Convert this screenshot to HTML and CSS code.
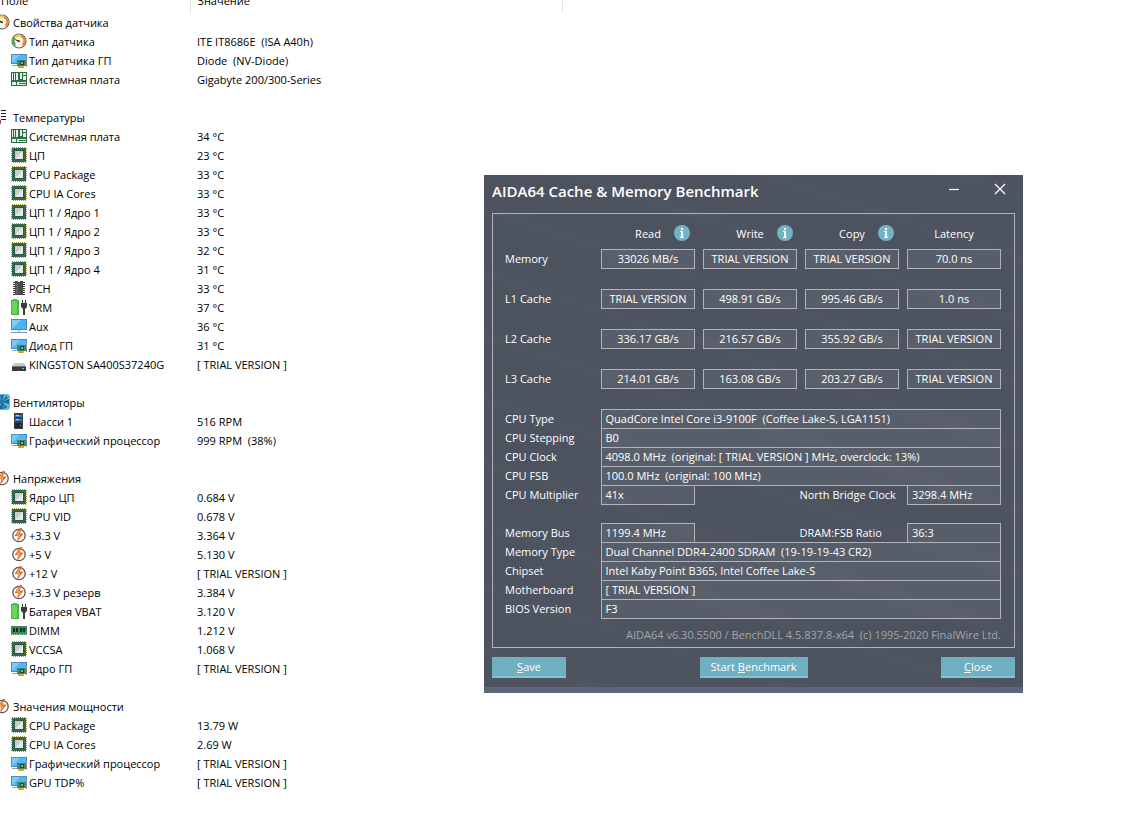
FILE: index.html
```html
<!DOCTYPE html>
<html lang="ru">
<head>
	<meta charset="UTF-8">
	<meta name="viewport" content="width=device-width, initial-scale=1.0">
	<title>AIDA64</title>
	<link rel="stylesheet" href="styles.css">
</head>
<body>
	<svg class="sprite" aria-hidden="true">
		<symbol id="gauge" viewBox="0 0 16 16">
			<circle cx="8" cy="8" r="7" fill="#fbf6e4" stroke="#666" stroke-width="1.2"/>
			<path d="M4.4 12A5.3 5.3 0 0 1 4 4.5" fill="none" stroke="#4fae4a" stroke-width="2.2"/>
			<path d="M4 4.5A5.3 5.3 0 0 1 10 3" fill="none" stroke="#f0cf5a" stroke-width="2.2"/>
			<path d="M10 3A5.3 5.3 0 0 1 11.6 12" fill="none" stroke="#e8893a" stroke-width="2.2"/>
			<path d="M3.6 6.2L8.6 7.4 9 9 7.4 9z" fill="#222"/>
		</symbol>
		<symbol id="gpu" viewBox="0 0 16 16">
			<path d="M0 2h16v10H0z" fill="#4590bd"/>
			<path d="M1 3h14v8H1z" fill="#55b4f2"/>
			<path d="M1 11L9 3H1z" fill="#7cc9fa"/>
			<path d="M1 13h5v1H1z" fill="#8ba3b5"/>
			<path d="M6 8h9v6H6z" fill="#3a8a68"/>
			<path d="M15 6h1v9h-1z" fill="#8a9296"/>
			<path d="M9 9h4v4H9z" fill="#1d4a3a"/>
			<path d="M10 10h2v2h-2z" fill="#86b9a3"/>
			<path d="M7 14h6v2H7z" fill="#e5ae22"/>
			<path d="M9 14h1v2H9z" fill="#c9941a"/>
		</symbol>
		<symbol id="board" viewBox="0 0 16 16">
			<path d="M0 1h16v14H0z" fill="#2b7045"/>
			<path d="M1 2h1v7H1zM3 2h1v7H3zM5 2h2v7H5zM9 2h2v6H9zM12 2h3v2h-3zM12 5h3v4h-3zM1 11h4v3H1zM6 11h9v3H6z" fill="#e4f0e6"/>
			<path d="M8 12h7v1H8z" fill="#2b7045"/>
		</symbol>
		<symbol id="cpu" viewBox="0 0 16 16">
			<rect x="1" y="1" width="14" height="14" fill="none" stroke="#a99a3c" stroke-width="2" stroke-dasharray="1 1"/>
			<path d="M1 1h14v14H1z" fill="#35694c"/>
			<path d="M3 3h10v10H3z" fill="#2a5a41"/>
			<path d="M4 4h8v8H4z" fill="#c9cecb"/>
			<path d="M4 12L12 4v8z" fill="#e5e8e6"/>
		</symbol>
		<symbol id="chip" viewBox="0 0 16 16">
			<path d="M2 2h12v1H2zM2 4h12v1H2zM2 6h12v1H2zM2 8h12v1H2zM2 10h12v1H2zM2 12h12v1H2zM2 14h12v1H2z" fill="#333"/>
			<path d="M4 1h3v1h2V1h3v14H4z" fill="#4a4a4a"/>
			<path d="M5 3h2v11H5z" fill="#626262"/>
		</symbol>
		<symbol id="battery" viewBox="0 0 16 16">
			<path d="M2 0h4v2H2z" fill="#8a948a"/>
			<path d="M0 1h8v15H0z" fill="#4bb446"/>
			<path d="M1 2h5v13H1z" fill="#66d85c"/>
			<path d="M11 1h1v4h-1zM14 1h1v4h-1zM10 4h6v4l-2 2h-2l-2-2zM12 9h2v7h-2z" fill="#3c3c3c"/>
		</symbol>
		<symbol id="monitor" viewBox="0 0 16 16">
			<path d="M0 1h16v11H0z" fill="#3b8bc4"/>
			<path d="M1 2h14v9H1z" fill="#4fb1f5"/>
			<path d="M1 11L10 2H1z" fill="#7ccbfb"/>
			<path d="M6 12h4v2H6z" fill="#cddde8"/>
			<path d="M0 14h16v1H0z" fill="#7d9cb5"/>
		</symbol>
		<symbol id="disk" viewBox="0 0 16 16">
			<path d="M3 7h10l2 3H1z" fill="#c9c9c9"/>
			<path d="M1 10h14v5H1z" fill="#3a3a3a"/>
			<path d="M1 10h14v1H1z" fill="#777"/>
			<path d="M11 12h2v1h-2z" fill="#5ddd55"/>
		</symbol>
		<symbol id="fan" viewBox="0 0 16 16">
			<rect width="16" height="16" rx="3" fill="#6db4d3"/>
			<path d="M8 8L6 1h4zM8 8l7-3v5zM8 8l2 7H5zM8 8l-7 3V5zM8 8l4-6 2 2zM8 8l5 5-2 2zM8 8l-5 6-2-3zM8 8L2 4l3-2z" fill="#146f9f"/>
			<circle cx="8" cy="8" r="2" fill="#1d7aa8"/>
		</symbol>
		<symbol id="tower" viewBox="0 0 16 16">
			<path d="M3 0h9v16H3z" fill="#3b4046"/>
			<path d="M4 2h7v2H4zM4 6h7v2H4z" fill="#2d7fe0"/>
			<path d="M5 2h3v1H5zM5 6h3v1H5z" fill="#a8d0ff"/>
			<path d="M4 10h7v5H4z" fill="#23272b"/>
			<path d="M9 12h1v1H9z" fill="#6fb5ff"/>
		</symbol>
		<symbol id="bolt" viewBox="0 0 16 16">
			<circle cx="8" cy="8.5" r="6.2" fill="#fff" stroke="#5a5450" stroke-width="1.3"/>
			<path d="M9 1L3.5 9h3.7L6 15l6.6-8.4H8.8L11 1z" fill="#df6a1c"/>
			<path d="M9 3.5L6 7.8h2.6L7.8 11" fill="none" stroke="#fbd9bd" stroke-width=".7"/>
		</symbol>
		<symbol id="dimm" viewBox="0 0 16 16">
			<path d="M0 4h16v9H0z" fill="#3d8a5e"/>
			<path d="M2 6h2v4H2zM5 6h2v4H5zM9 6h2v4H9zM12 6h2v4h-2z" fill="#1f2c26"/>
			<path d="M1 12h1v1H1zM3 12h1v1H3zM5 12h1v1H5zM8 12h1v1H8zM10 12h1v1h-1zM12 12h1v1h-1zM14 12h1v1h-1z" fill="#d6d08a"/>
		</symbol>
		<symbol id="thermo" viewBox="0 0 16 16">
			<path d="M5 0h1v12H5z" fill="#222"/>
			<circle cx="4" cy="13" r="3" fill="#b5161b"/>
			<path d="M7 1h5v1H7zM7 4h5v1H7zM7 7h5v1H7zM7 10h5v1H7z" fill="#222"/>
		</symbol>
		<symbol id="i" viewBox="0 0 16 16">
			<circle cx="8" cy="8" r="8" fill="#73b4c4"/>
			<path d="M7 3h2v2H7zM6 6h3v6h1v1H6v-1h1V7H6z" fill="#fff"/>
		</symbol>
	</svg>

	<main>
		<table class="sensors">
			<thead>
				<tr>
					<th><div>Поле</div></th>
					<th><div>Значение</div></th>
				</tr>
			</thead>
			<tbody>
				<tr class="group"><th colspan="2"><svg><use href="#gauge"/></svg>Свойства датчика</th></tr>
				<tr><td><svg><use href="#gauge"/></svg>Тип датчика</td><td>ITE IT8686E&nbsp; (ISA A40h)</td></tr>
				<tr><td><svg><use href="#gpu"/></svg>Тип датчика ГП</td><td>Diode&nbsp; (NV-Diode)</td></tr>
				<tr><td><svg><use href="#board"/></svg>Системная плата</td><td>Gigabyte 200/300-Series</td></tr>
			</tbody>
			<tbody>
				<tr class="group"><th colspan="2"><svg><use href="#thermo"/></svg>Температуры</th></tr>
				<tr><td><svg><use href="#board"/></svg>Системная плата</td><td>34 °C</td></tr>
				<tr><td><svg><use href="#cpu"/></svg>ЦП</td><td>23 °C</td></tr>
				<tr><td><svg><use href="#cpu"/></svg>CPU Package</td><td>33 °C</td></tr>
				<tr><td><svg><use href="#cpu"/></svg>CPU IA Cores</td><td>33 °C</td></tr>
				<tr><td><svg><use href="#cpu"/></svg>ЦП 1 / Ядро 1</td><td>33 °C</td></tr>
				<tr><td><svg><use href="#cpu"/></svg>ЦП 1 / Ядро 2</td><td>33 °C</td></tr>
				<tr><td><svg><use href="#cpu"/></svg>ЦП 1 / Ядро 3</td><td>32 °C</td></tr>
				<tr><td><svg><use href="#cpu"/></svg>ЦП 1 / Ядро 4</td><td>31 °C</td></tr>
				<tr><td><svg><use href="#chip"/></svg>PCH</td><td>33 °C</td></tr>
				<tr><td><svg><use href="#battery"/></svg>VRM</td><td>37 °C</td></tr>
				<tr><td><svg><use href="#monitor"/></svg>Aux</td><td>36 °C</td></tr>
				<tr><td><svg><use href="#gpu"/></svg>Диод ГП</td><td>31 °C</td></tr>
				<tr><td><svg><use href="#disk"/></svg>KINGSTON SA400S37240G</td><td>[ TRIAL VERSION ]</td></tr>
			</tbody>
			<tbody>
				<tr class="group"><th colspan="2"><svg><use href="#fan"/></svg>Вентиляторы</th></tr>
				<tr><td><svg><use href="#tower"/></svg>Шасси 1</td><td>516 RPM</td></tr>
				<tr><td><svg><use href="#gpu"/></svg>Графический процессор</td><td>999 RPM&nbsp; (38%)</td></tr>
			</tbody>
			<tbody>
				<tr class="group"><th colspan="2"><svg><use href="#bolt"/></svg>Напряжения</th></tr>
				<tr><td><svg><use href="#cpu"/></svg>Ядро ЦП</td><td>0.684 V</td></tr>
				<tr><td><svg><use href="#cpu"/></svg>CPU VID</td><td>0.678 V</td></tr>
				<tr><td><svg><use href="#bolt"/></svg>+3.3 V</td><td>3.364 V</td></tr>
				<tr><td><svg><use href="#bolt"/></svg>+5 V</td><td>5.130 V</td></tr>
				<tr><td><svg><use href="#bolt"/></svg>+12 V</td><td>[ TRIAL VERSION ]</td></tr>
				<tr><td><svg><use href="#bolt"/></svg>+3.3 V резерв</td><td>3.384 V</td></tr>
				<tr><td><svg><use href="#battery"/></svg>Батарея VBAT</td><td>3.120 V</td></tr>
				<tr><td><svg><use href="#dimm"/></svg>DIMM</td><td>1.212 V</td></tr>
				<tr><td><svg><use href="#cpu"/></svg>VCCSA</td><td>1.068 V</td></tr>
				<tr><td><svg><use href="#gpu"/></svg>Ядро ГП</td><td>[ TRIAL VERSION ]</td></tr>
			</tbody>
			<tbody>
				<tr class="group"><th colspan="2"><svg><use href="#bolt"/></svg>Значения мощности</th></tr>
				<tr><td><svg><use href="#cpu"/></svg>CPU Package</td><td>13.79 W</td></tr>
				<tr><td><svg><use href="#cpu"/></svg>CPU IA Cores</td><td>2.69 W</td></tr>
				<tr><td><svg><use href="#gpu"/></svg>Графический процессор</td><td>[ TRIAL VERSION ]</td></tr>
				<tr><td><svg><use href="#gpu"/></svg>GPU TDP%</td><td>[ TRIAL VERSION ]</td></tr>
			</tbody>
		</table>
	</main>

	<section class="dialog" role="dialog" aria-labelledby="title" lang="en">
		<header>
			<h1 id="title">AIDA64 Cache &amp; Memory Benchmark</h1>
			<button class="win" aria-label="Minimize"><svg viewBox="0 0 12 12"><path d="M1 6.5h10"/></svg></button>
			<button class="win" aria-label="Close window"><svg viewBox="0 0 12 12"><path d="M1 1l10 10M11 1L1 11"/></svg></button>
		</header>

		<div class="panel">
			<table class="bench">
				<thead>
					<tr>
						<td></td>
						<th>Read<button class="info" aria-label="About read"><svg><use href="#i"/></svg></button></th>
						<th>Write<button class="info" aria-label="About write"><svg><use href="#i"/></svg></button></th>
						<th>Copy<button class="info" aria-label="About copy"><svg><use href="#i"/></svg></button></th>
						<th>Latency</th>
					</tr>
				</thead>
				<tbody>
					<tr><th>Memory</th><td><span>33026 MB/s</span></td><td><span>TRIAL VERSION</span></td><td><span>TRIAL VERSION</span></td><td><span>70.0 ns</span></td></tr>
					<tr><th>L1 Cache</th><td><span>TRIAL VERSION</span></td><td><span>498.91 GB/s</span></td><td><span>995.46 GB/s</span></td><td><span>1.0 ns</span></td></tr>
					<tr><th>L2 Cache</th><td><span>336.17 GB/s</span></td><td><span>216.57 GB/s</span></td><td><span>355.92 GB/s</span></td><td><span>TRIAL VERSION</span></td></tr>
					<tr><th>L3 Cache</th><td><span>214.01 GB/s</span></td><td><span>163.08 GB/s</span></td><td><span>203.27 GB/s</span></td><td><span>TRIAL VERSION</span></td></tr>
				</tbody>
			</table>

			<table class="specs">
				<colgroup><col class="name"><col class="val"><col><col class="name2"><col class="val"></colgroup>
				<tr><th>CPU Type</th><td colspan="4">QuadCore Intel Core i3-9100F&nbsp; (Coffee Lake-S, LGA1151)</td></tr>
				<tr><th>CPU Stepping</th><td colspan="4">B0</td></tr>
				<tr><th>CPU Clock</th><td colspan="4">4098.0 MHz&nbsp; (original: [ TRIAL VERSION ] MHz, overclock: 13%)</td></tr>
				<tr><th>CPU FSB</th><td colspan="4">100.0 MHz&nbsp; (original: 100 MHz)</td></tr>
				<tr><th>CPU Multiplier</th><td>41x</td><th></th><th>North Bridge Clock</th><td>3298.4 MHz</td></tr>
			</table>

			<table class="specs">
				<colgroup><col class="name"><col class="val"><col><col class="name2"><col class="val"></colgroup>
				<tr><th>Memory Bus</th><td>1199.4 MHz</td><th></th><th>DRAM:FSB Ratio</th><td>36:3</td></tr>
				<tr><th>Memory Type</th><td colspan="4">Dual Channel DDR4-2400 SDRAM&nbsp; (19-19-19-43 CR2)</td></tr>
				<tr><th>Chipset</th><td colspan="4">Intel Kaby Point B365, Intel Coffee Lake-S</td></tr>
				<tr><th>Motherboard</th><td colspan="4">[ TRIAL VERSION ]</td></tr>
				<tr><th>BIOS Version</th><td colspan="4">F3</td></tr>
			</table>

			<p class="version">AIDA64 v6.30.5500 / BenchDLL 4.5.837.8-x64&nbsp; (c) 1995-2020 FinalWire Ltd.</p>
		</div>

		<footer>
			<button><u>S</u>ave</button>
			<button class="start">Start <u>B</u>enchmark</button>
			<button><u>C</u>lose</button>
		</footer>
	</section>
</body>
</html>
```

FILE: styles.css
```css
* {
	box-sizing: border-box;
	margin: 0;
	padding: 0;
}

body {
	font-family: "Open Sans", "Noto Sans", sans-serif;
	font-size: 11px;
	line-height: 18px;
	color: #000;
	background: #fff;
	overflow-x: hidden;
}

table {
	border-collapse: collapse;
	table-layout: fixed;
}

th {
	font-weight: normal;
	text-align: left;
}

button {
	font: inherit;
	color: inherit;
	background: none;
	border: 0;
}

.sprite {
	position: absolute;
	width: 0;
	height: 0;
}

/* sensor list, scrolled a little to the right */
.sensors {
	width: 569px;
	margin-left: -6px;
	line-height: 19px;
	white-space: nowrap;
}

.sensors thead th {
	padding-left: 7px;
	border-right: 1px solid #e3e3e3;
}

.sensors thead th:first-child {
	width: 196px;
}

.sensors thead div {
	display: flex;
	align-items: flex-end;
	height: 13px;
	line-height: 24px;
	overflow: hidden;
}

.sensors tbody td,
.sensors tbody th {
	height: 19px;
}

.sensors tbody td:first-child {
	padding-left: 17px;
}

.sensors tbody td:last-child {
	padding-left: 7px;
}

.sensors svg {
	width: 16px;
	height: 16px;
	margin: 1px 2px 0 0;
	vertical-align: top;
}

.sensors .group svg {
	margin-right: 3px;
}

.sensors tbody + tbody::before {
	content: "";
	display: table-row;
	height: 19px;
}

/* benchmark window */
.dialog {
	position: absolute;
	top: 175px;
	left: 484px;
	width: 539px;
	padding: 0 8px 9px;
	color: #fff;
	background:
		repeating-linear-gradient(18deg, transparent 0 22px, rgba(255, 255, 255, .02) 34px, transparent 46px 60px),
		#4c525e;
	border-bottom: 6px solid #5a687a;
}

.dialog header {
	display: flex;
	align-items: center;
	height: 38px;
	padding-bottom: 6px;
}

.dialog h1 {
	flex: 1;
	font-size: 15px;
	font-weight: 600;
	line-height: 20px;
}

.win {
	width: 46px;
	height: 28px;
}

.win:last-child {
	width: 30px;
	margin-left: 8px;
}

.win svg {
	display: block;
	width: 12px;
	height: 12px;
	margin: 6px auto 10px;
	fill: none;
	stroke: #fff;
	stroke-width: 1.2;
}

.panel {
	padding: 10px 13px 3px 12px;
	border: 1px solid #b0b3ba;
}

.bench,
.specs {
	width: 100%;
}

.bench td,
.bench th {
	height: 40px;
	padding-left: 8px;
	text-align: center;
	vertical-align: top;
}

.bench thead td,
.bench thead th {
	width: 102px;
	height: 25px;
}

.bench thead th {
	padding-top: 1px;
}

.bench thead td:first-child {
	width: 88px;
}

.bench tbody th {
	padding: 1px 0 0;
	text-align: left;
}

.bench span {
	display: block;
	border: 1px solid #b0b3ba;
	background: rgba(255, 255, 255, .07);
}

.info {
	width: 16px;
	height: 16px;
	margin: 0 -29px 0 13px;
	vertical-align: top;
}

.info svg {
	display: block;
	width: 16px;
	height: 16px;
}

.specs + .specs {
	margin-top: 18px;
}

.specs th,
.specs td {
	height: 19px;
	white-space: nowrap;
}

.specs td {
	padding-left: 4px;
	border: 1px solid #b0b3ba;
	background: rgba(255, 255, 255, .07);
}

.name {
	width: 96px;
}

.val {
	width: 93px;
}

.name2 {
	width: 108px;
}

.version {
	margin-top: 7px;
	color: #a3a6ad;
	text-align: right;
}

.dialog footer {
	display: flex;
	justify-content: space-between;
	padding-top: 9px;
}

.dialog footer button {
	width: 74px;
	height: 21px;
	background: #70afc0;
	border-bottom: 2px solid #7fc4cf;
}

.dialog footer .start {
	width: 108px;
}
```
